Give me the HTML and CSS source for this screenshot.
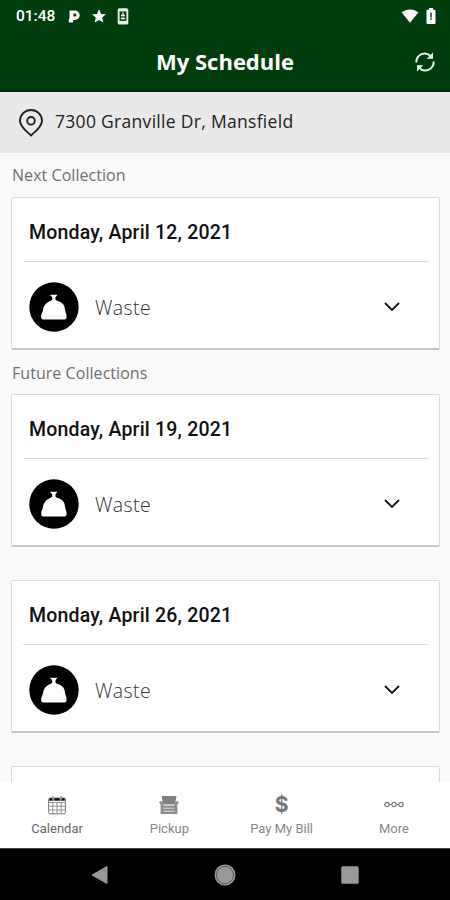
FILE: index.html
```html
<!DOCTYPE html>
<html lang="en">
<head>
  <meta charset="UTF-8"/>
  <meta name="viewport" content="width=device-width,initial-scale=1"/>
  <title>My Schedule</title>
  <link rel="stylesheet" href="styles.css">
</head>
<body>
  <!-- shared icons -->
  <svg class="icon-defs" width="0" height="0">
    <symbol id="icon-waste" viewBox="0 0 50 50">
      <circle cx="25" cy="25" r="24.7" fill="#000"/>
      <path d="M20.800 12.700h7.600l-1.900 2.500v2.600l1.500.9c3.300.7 6.200 2.600 7.400 5.700l1 5.100 1.100 3.500v3.200l-1.600 1.400H13.700l-1.500-1.400v-3.200l1.400-3.500.9-4c1.200-3.300 4.300-6.100 7.300-6.800l1.400-.9v-2.600z" fill="#fff"/>
    </symbol>
    <symbol id="icon-chevron" viewBox="0 0 16 10">
      <path d="M1 1l7 7 7-7" fill="none" stroke="#111" stroke-width="1.8"/>
    </symbol>
  </svg>

  <div class="app">
    <header class="header">
      <div class="status-bar">
        <span class="time">01:48</span>
        <svg class="status-p" width="13" height="15" viewBox="0 0 13 15">
          <path d="M1.500 1.500H7a4.700 4.700 0 0 1 0 9.400H5.300L4.800 13.400H.8V9.800h.7zM5.400 4.600v3h1.500a1.500 1.500 0 0 0 0-3z" fill="#fff" fill-rule="evenodd"/>
        </svg>
        <svg class="status-star" width="14" height="14" viewBox="0 0 14 14">
          <path d="M7 .3l2 4.600 4.900.4-3.700 3.300 1.100 4.900L7 10.900l-4.300 2.600 1.100-4.900L.1 5.300 5 4.900z" fill="#fff"/>
        </svg>
        <svg class="status-sim" width="12" height="17" viewBox="0 0 12 17">
          <rect x=".7" y=".3" width="10.600" height="16.200" rx="1.600" fill="#e6efe6"/>
          <rect x="2.600" y="3.500" width="6.800" height="9.400" fill="#013d0c"/>
          <path d="M6 4.500v4M4 7.500h4M3.800 10.500h4.400M6 9.500v2" stroke="#fff" stroke-width="1.300"/>
        </svg>
        <span class="spacer"></span>
        <svg width="18" height="14" viewBox="0 0 18 14">
          <path d="M.5 3.300C5.500-.6 12.500-.6 17.500 3.300L9 13.700z" fill="#fff"/>
        </svg>
        <svg class="status-battery" width="10" height="16" viewBox="0 0 10 16">
          <path d="M3 0h4v1.700h1.500a1 1 0 0 1 1 1V15a1 1 0 0 1-1 1h-7a1 1 0 0 1-1-1V2.700a1 1 0 0 1 1-1H3z" fill="#fff"/>
          <path d="M5 4.800v4.700M5 10.300v1.400" stroke="#013d0c" stroke-width="1.500"/>
        </svg>
      </div>
      <div class="title-bar">
        <h1 class="title">My Schedule</h1>
        <svg class="refresh" width="20" height="20" viewBox="0 0 20 20">
          <g fill="none" stroke="#e8f0e8" stroke-width="1.900">
            <path d="M1.300 10.500C1 5 5.500 1.300 10 1.500c2.800.1 4.500 1.200 6.300 3.200M18.700 9.500C19 15 14.500 18.700 10 18.500c-2.800-.1-4.500-1.200-6.300-3.200"/>
          </g>
          <path d="M18 .5v6.300h-6.300zM2 19.500v-6.300h6.300z" fill="#e8f0e8"/>
        </svg>
      </div>
    </header>

    <div class="address-bar">
      <svg class="pin" width="24" height="28" viewBox="0 0 24 28">
        <g fill="none" stroke="#222" stroke-width="1.900">
          <path d="M12 26.500C8 22.500 1 18 1 11.700a11 10.700 0 0 1 22 0C23 18 16 22.500 12 26.500z"/>
          <circle cx="12" cy="11.800" r="3.800"/>
        </g>
      </svg>
      <span class="address">7300 Granville Dr, Mansfield</span>
    </div>

    <main class="schedule">
      <h2 class="section-title">Next Collection</h2>
      <div class="card">
        <h3 class="card-date">Monday, April 12, 2021</h3>
        <div class="card-row">
          <svg class="waste-icon"><use href="#icon-waste"/></svg>
          <span class="waste-label">Waste</span>
          <svg class="chevron"><use href="#icon-chevron"/></svg>
        </div>
      </div>

      <h2 class="section-title future">Future Collections</h2>
      <div class="card">
        <h3 class="card-date">Monday, April 19, 2021</h3>
        <div class="card-row">
          <svg class="waste-icon"><use href="#icon-waste"/></svg>
          <span class="waste-label">Waste</span>
          <svg class="chevron"><use href="#icon-chevron"/></svg>
        </div>
      </div>
      <div class="card card-next">
        <h3 class="card-date">Monday, April 26, 2021</h3>
        <div class="card-row">
          <svg class="waste-icon"><use href="#icon-waste"/></svg>
          <span class="waste-label">Waste</span>
          <svg class="chevron"><use href="#icon-chevron"/></svg>
        </div>
      </div>
      <div class="card card-next"></div>
    </main>

    <nav class="tabs">
      <div class="tab active">
        <svg width="18" height="20" viewBox="0 0 18 20">
          <rect x=".6" y="3" width="16.800" height="15.800" rx="1.500" fill="#fff" stroke="#777" stroke-width="1"/>
          <path d="M1 7.500h16M1 11.200h16M1 15h16M4.800 7.500v11M9 7.500v11M13.200 7.500v11" stroke="#888" stroke-width=".9"/>
          <path d="M1 3.200h16v2.600H1z" fill="#777"/>
          <path d="M1.500 3.200h3v2.300h-3zM6.500 3.200h5v2.300h-5zM13.500 3.200h3v2.300h-3z" fill="#111"/>
          <path d="M4.800 1v3.500M13.200 1v3.500" stroke="#999" stroke-width="1.500"/>
        </svg>
        <span class="tab-label">Calendar</span>
      </div>
      <div class="tab">
        <svg width="20" height="20" viewBox="0 0 20 20">
          <path d="M2.500 1h15l-1.500 8.500H4z" fill="#808080"/>
          <path d="M.3 7.300c0-1.300 3-1.300 3.500 0L4.500 10h11l.7-2.700c.5-1.300 3.500-1.300 3.500 0 0 1-.8 1.500-1.300 2V19H1.600V9.300c-.5-.5-1.300-1-1.300-2z" fill="#8c8c8c"/>
          <path d="M4.500 10.300h11M4.500 13.200h11M4.500 16.200h11" stroke="#e6e6e6" stroke-width=".9"/>
        </svg>
        <span class="tab-label">Pickup</span>
      </div>
      <div class="tab">
        <span class="dollar">$</span>
        <span class="tab-label">Pay My Bill</span>
      </div>
      <div class="tab">
        <svg width="20" height="20" viewBox="0 0 20 20">
          <g fill="none" stroke="#777" stroke-width="1.200">
            <circle cx="3" cy="9.500" r="2.200"/>
            <circle cx="10" cy="9.500" r="2.200"/>
            <circle cx="17" cy="9.500" r="2.200"/>
            <path d="M5.200 9.500h2.600M12.200 9.500h2.600"/>
          </g>
        </svg>
        <span class="tab-label">More</span>
      </div>
    </nav>

    <!-- Android navigation -->
    <div class="nav-bar">
      <svg width="17" height="20" viewBox="0 0 17 20">
        <path d="M16 1.500v17L1 10z" fill="#999" stroke="#999" stroke-linejoin="round"/>
      </svg>
      <svg width="22" height="22" viewBox="0 0 22 22">
        <circle cx="11" cy="11" r="10.500" fill="#999"/>
        <circle cx="11" cy="11" r="8.600" fill="none" stroke="#555" stroke-width=".9"/>
      </svg>
      <svg width="18" height="18" viewBox="0 0 18 18">
        <rect x=".3" y=".3" width="17.400" height="17.400" rx="1.500" fill="#999"/>
      </svg>
    </div>
  </div>
</body>
</html>
```
FILE: styles.css
```css
body {
  margin: 0;
  font-family: 'Open Sans', 'Noto Sans', sans-serif;
  background-color: #fafafa;
}

svg {
  display: block;
  flex-shrink: 0;
}

h1, h2, h3 {
  margin: 0;
  white-space: nowrap;
}

.icon-defs {
  display: none;
}

.app {
  display: flex;
  flex-direction: column;
  width: 450px;
  height: 900px;
  overflow: hidden;
}

/* HEADER */
.header {
  height: 92px;
  box-sizing: border-box;
  background-color: #013d0c;
  border-bottom: 2px solid #01280a;
  color: #fff;
}

.status-bar {
  display: flex;
  align-items: center;
  height: 32px;
  padding: 0 14px 0 16px;
}

.time {
  width: 52px;
  font-family: Roboto, sans-serif;
  font-size: 15.5px;
  font-weight: 500;
}

.status-star {
  margin-left: 11px;
}

.status-sim {
  margin-left: 11px;
}

.spacer {
  flex: 1;
}

.status-battery {
  margin-left: 7px;
}

.title-bar {
  display: grid;
  grid-template-columns: 1fr auto 1fr;
  align-items: center;
  height: 60px;
  padding: 0 15px;
}

.title {
  grid-column: 2;
  padding-bottom: 2px;
  font-size: 22px;
  line-height: 58px;
  font-weight: 700;
}

.refresh {
  justify-self: end;
}

/* ADDRESS */
.address-bar {
  display: flex;
  align-items: center;
  height: 61px;
  padding: 0 19px;
  box-sizing: border-box;
  background-color: #e9e9e9;
}

.address {
  margin-left: 12px;
  padding-bottom: 3px;
  font-size: 17.5px;
  letter-spacing: 0.3px;
  color: #222;
}

/* SCHEDULE */
.schedule {
  flex: 1;
  min-height: 0;
  padding: 0 10px 0 11px;
  overflow: hidden;
}

.section-title {
  height: 44px;
  padding-left: 1px;
  line-height: 45px;
  font-size: 16px;
  font-weight: 400;
  letter-spacing: 0.05px;
  color: #707070;
}

.future {
  line-height: 46px;
}

.card {
  height: 153px;
  box-sizing: border-box;
  padding: 0 11px;
  border: 1px solid #dcdcdc;
  border-bottom: 2px solid #c8c8c8;
  border-radius: 2px;
  background-color: #fff;
}

.card-next {
  margin-top: 33px;
}

.card-date {
  height: 64px;
  box-sizing: border-box;
  padding-left: 6px;
  border-bottom: 1px solid #ddd;
  font-family: Roboto, sans-serif;
  font-size: 19.5px;
  font-weight: 500;
  letter-spacing: 0.2px;
  line-height: 69px;
  color: #111;
}

.card-row {
  display: flex;
  align-items: center;
  height: 90px;
  padding: 0 28px 0 6px;
}

.waste-icon {
  width: 50px;
  height: 50px;
}

.waste-label {
  flex: 1;
  margin-left: 16px;
  font-size: 19.5px;
  font-weight: 300;
  letter-spacing: 0.4px;
  color: #333;
}

.chevron {
  width: 16px;
  height: 10px;
}

/* TABS */
.tabs {
  display: grid;
  grid-template-columns: repeat(4, 1fr);
  height: 66px;
  padding-left: 1px;
  background-color: #fff;
}

.tab {
  display: flex;
  flex-direction: column;
  align-items: center;
  padding-top: 13px;
  font-family: Roboto, sans-serif;
  font-size: 13px;
  color: #888;
}

.tab-label {
  margin-top: 5px;
  line-height: 18px;
}

.active {
  color: #666;
}

.dollar {
  height: 20px;
  line-height: 20px;
  font-family: Inter, sans-serif;
  font-size: 21px;
  font-weight: 700;
  color: #777;
}

.nav-bar {
  display: flex;
  align-items: center;
  justify-content: space-between;
  height: 52px;
  padding: 0 91px;
  box-sizing: border-box;
  border-top: 1px solid #444;
  background-color: #000;
}
```
